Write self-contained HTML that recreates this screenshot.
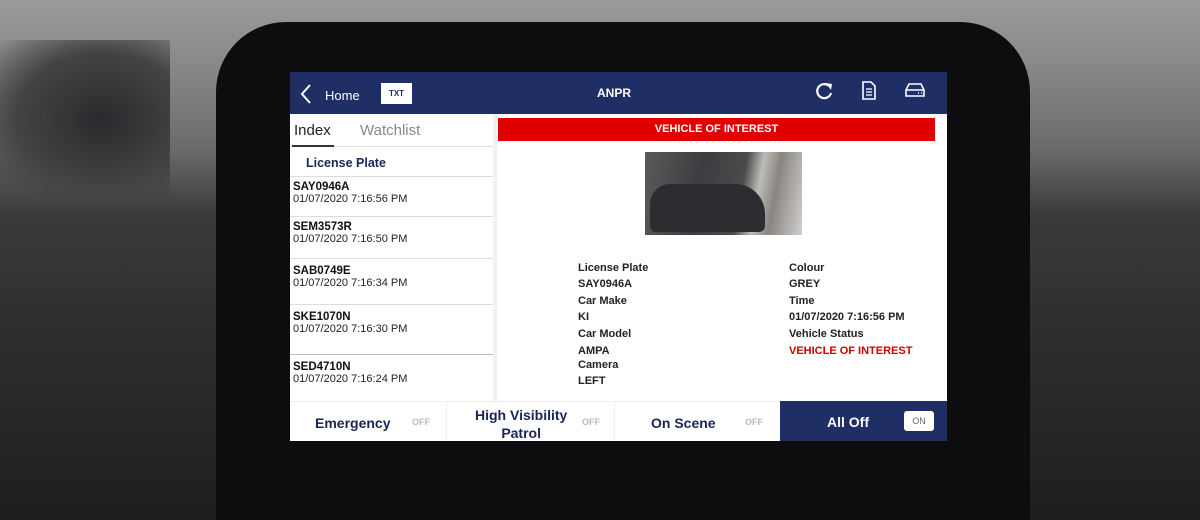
<!DOCTYPE html><html><head><style>
*{margin:0;padding:0;box-sizing:border-box}
html{width:1200px;height:520px;overflow:hidden}
body{width:1200px;height:520px;overflow:hidden;position:relative;font-family:"Liberation Sans",sans-serif;
background:linear-gradient(180deg,#9a9a9a 0,#8a8a8a 60px,#6a6a6a 150px,#3a3a3a 215px,#2e2e2e 330px,#1e1e1e 520px)}
.lft{position:absolute;left:0;top:40px;width:170px;height:160px;background:radial-gradient(ellipse at 60% 50%,#2a2a2e 0,#444 60%,rgba(80,80,80,0) 100%)}
.bezel{position:absolute;left:216px;top:22px;width:814px;height:498px;background:#0d0d0f;border-radius:70px 70px 0 0}
.scr{position:absolute;left:290px;top:72px;width:657px;height:369px;background:#fff;overflow:hidden;font-size:12px;color:#111}
.hdr{position:absolute;left:0;top:0;width:657px;height:42px;background:#1f2f66;color:#fff}
.abs{position:absolute}
.b{font-weight:bold}
.row{position:absolute;left:0;width:203px;border-top:1px solid #ddd;padding:4px 3px}
.row .p{font-weight:bold;font-size:11.5px}
.row .d{font-size:11px;color:#222}
.lab{position:absolute;font-size:11px;font-weight:bold;color:#222}
.bot{position:absolute;top:329px;height:40px;border-top:1px solid #eee;color:#1a2556;font-weight:bold;font-size:14px}
.off{position:absolute;font-size:9px;color:#bbb;top:15px}
</style></head><body>
<div class="lft"></div>
<div class="bezel"></div>
<div class="scr">
 <div class="hdr">
  <svg class="abs" style="left:10px;top:11px" width="12" height="22"><path d="M10 2 L2 11 L10 20" stroke="#fff" stroke-width="2" fill="none"/></svg>
  <div class="abs" style="left:35px;top:16px;font-size:13px">Home</div>
  <div class="abs" style="left:91px;top:11px;width:31px;height:21px;background:#fff;color:#1f2f66;font-size:8px;font-weight:bold;text-align:center;line-height:21px">TXT</div>
  <div class="abs b" style="left:307px;top:14px;font-size:12px">ANPR</div>
  <svg class="abs" style="left:525px;top:9px" width="20" height="20"><path d="M14 5 A7 7 0 1 0 16 12" stroke="#fff" stroke-width="2.2" fill="none"/><path d="M11 2 L17 3 L16 9 Z" fill="#fff"/></svg>
  <svg class="abs" style="left:570px;top:8px" width="18" height="22"><path d="M3 2 H11 L15 6 V19 H3 Z" stroke="#fff" stroke-width="1.6" fill="none"/><path d="M6 9h6M6 12h6M6 15h6" stroke="#fff" stroke-width="1.2"/></svg>
  <svg class="abs" style="left:614px;top:10px" width="22" height="16"><path d="M5 2 H17 L20 8 V14 H2 V8 Z M2 8 H20" stroke="#fff" stroke-width="1.6" fill="none"/><path d="M14 11h1M17 11h1" stroke="#fff" stroke-width="1.5"/></svg>
 </div>
 <div class="abs" style="left:4px;top:50px;font-size:15px;color:#222">Index</div>
 <div class="abs" style="left:70px;top:50px;font-size:15px;color:#888">Watchlist</div>
 <div class="abs" style="left:0;top:74px;width:203px;height:1px;background:#ddd"></div>
 <div class="abs" style="left:2px;top:73px;width:42px;height:2px;background:#333"></div>
 <div class="abs b" style="left:16px;top:84px;font-size:12.5px;color:#1a2556">License Plate</div>
 <div class="row" style="top:104px;height:40px"><div class="p">SAY0946A</div><div class="d">01/07/2020 7:16:56 PM</div></div>
 <div class="row" style="top:144px;height:42px"><div class="p">SEM3573R</div><div class="d">01/07/2020 7:16:50 PM</div></div>
 <div class="row" style="top:186px;height:46px;padding-top:6px"><div class="p">SAB0749E</div><div class="d">01/07/2020 7:16:34 PM</div></div>
 <div class="row" style="top:232px;height:50px;padding-top:6px"><div class="p">SKE1070N</div><div class="d">01/07/2020 7:16:30 PM</div></div>
 <div class="row" style="top:282px;height:47px;padding-top:6px;border-top:1px solid #bbb"><div class="p">SED4710N</div><div class="d">01/07/2020 7:16:24 PM</div></div>
 <div class="abs" style="left:203px;top:42px;width:4px;height:287px;background:#f2f2f2"></div>
 <div class="abs b" style="left:208px;top:46px;width:437px;height:23px;background:#e00000;color:#fff;font-size:11px;text-align:center;line-height:23px">VEHICLE OF INTEREST</div>
 <div class="abs" style="left:355px;top:80px;width:157px;height:83px;background:linear-gradient(100deg,#5a5a5a 0,#3c3d40 35%,#4a4a4c 60%,#bdbdb8 70%,#8a8580 80%,#cfcfcf 100%)"></div>
 <div class="abs" style="left:360px;top:112px;width:115px;height:48px;background:#2c2d30;border-radius:20px 30px 6px 6px"></div>
 <div class="lab" style="left:288px;top:190px">License Plate</div>
 <div class="lab" style="left:288px;top:206px">SAY0946A</div>
 <div class="lab" style="left:288px;top:223px">Car Make</div>
 <div class="lab" style="left:288px;top:239px">KI</div>
 <div class="lab" style="left:288px;top:256px">Car Model</div>
 <div class="lab" style="left:288px;top:273px">AMPA</div>
 <div class="lab" style="left:288px;top:287px">Camera</div>
 <div class="lab" style="left:288px;top:303px">LEFT</div>
 <div class="lab" style="left:499px;top:190px">Colour</div>
 <div class="lab" style="left:499px;top:206px">GREY</div>
 <div class="lab" style="left:499px;top:223px">Time</div>
 <div class="lab" style="left:499px;top:239px">01/07/2020 7:16:56 PM</div>
 <div class="lab" style="left:499px;top:256px">Vehicle Status</div>
 <div class="lab" style="left:499px;top:273px;color:#c00">VEHICLE OF INTEREST</div>
 <div class="bot" style="left:0;width:156px"><span class="abs" style="left:25px;top:13px">Emergency</span><span class="off" style="left:122px">OFF</span></div>
 <div class="bot" style="left:156px;width:168px;border-left:1px solid #eee"><span class="abs" style="left:28px;top:4px;text-align:center;line-height:18px">High Visibility<br>Patrol</span><span class="off" style="left:135px">OFF</span></div>
 <div class="bot" style="left:324px;width:166px;border-left:1px solid #eee"><span class="abs" style="left:36px;top:13px">On Scene</span><span class="off" style="left:130px">OFF</span></div>
 <div class="bot" style="left:490px;width:167px;background:#1f2f66;color:#fff;border:none"><span class="abs" style="left:47px;top:13px">All Off</span><span class="abs" style="left:124px;top:10px;width:30px;height:20px;background:#fff;border-radius:3px;color:#666;font-size:9px;font-weight:normal;text-align:center;line-height:20px">ON</span></div>
</div>
</body></html>
